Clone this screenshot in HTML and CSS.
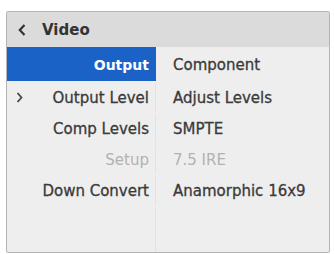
FILE: index.html
```html
<!DOCTYPE html>
<html lang="en">
<head>
  <meta charset="UTF-8">
  <title>Video</title>
  <link rel="stylesheet" href="styles.css">
</head>
<body>
  <div class="panel">
    <div class="header">
      <svg class="back" width="8" height="12" viewBox="0 0 8 12"><path d="M6.5 1 L1.8 6 L6.5 11" fill="none" stroke="#333" stroke-width="2.2"/></svg>
      <span class="title">Video</span>
    </div>
    <div class="list">
      <div class="row first">
        <div class="label selected">Output</div>
        <div class="value">Component</div>
      </div>
      <div class="row">
        <div class="label">
          <svg class="more" width="7" height="11" viewBox="0 0 7 11"><path d="M1.5 1 L5.5 5.5 L1.5 10" fill="none" stroke="#444" stroke-width="1.8"/></svg>
          Output Level
        </div>
        <div class="value">Adjust Levels</div>
      </div>
      <div class="row">
        <div class="label">Comp Levels</div>
        <div class="value">SMPTE</div>
      </div>
      <div class="row disabled">
        <div class="label">Setup</div>
        <div class="value">7.5 IRE</div>
      </div>
      <div class="row">
        <div class="label">Down Convert</div>
        <div class="value">Anamorphic 16x9</div>
      </div>
      <div class="row filler">
        <div class="label"></div>
        <div class="value"></div>
      </div>
    </div>
  </div>
</body>
</html>
```
FILE: styles.css
```css
* {
  box-sizing: border-box;
  margin: 0;
  padding: 0;
}

body {
  font-family: "DejaVu Sans", sans-serif;
  background-color: #fff;
}

.panel {
  width: 324px;
  height: 242px;
  margin: 11px 0 0 6px;
  border: 1px solid #b4b4b4;
  border-radius: 2px;
  background-color: #eeeeee;
  display: flex;
  flex-direction: column;
  overflow: hidden;
}

.header {
  height: 35px;
  background-color: #dbdbdb;
  display: flex;
  align-items: center;
  padding-left: 11px;
  flex-shrink: 0;
}

.back {
  margin-right: 16px;
}

.title {
  font-size: 15px;
  font-weight: bold;
  color: #333;
}

.list {
  flex: 1;
  display: flex;
  flex-direction: column;
}

.row {
  display: grid;
  grid-template-columns: 149px 1fr;
  height: 31px;
  padding-top: 2px;
  font-size: 15px;
  color: #3a3a3a;
  -webkit-text-stroke: 0.3px #3a3a3a;
}

.row.first {
  height: 34px;
  padding-top: 0;
}

.row.filler {
  flex: 1;
}

.label {
  display: flex;
  align-items: center;
  justify-content: flex-end;
  padding-right: 6px;
  border-right: 1px solid #e2e2e2;
  position: relative;
}

.label.selected {
  background-color: #1b62c7;
  color: #fff;
  -webkit-text-stroke: 0;
  font-size: 14px;
  font-weight: bold;
  padding-top: 2px;
  border-right-color: #1b62c7;
}

.first .value {
  padding-top: 2px;
}

.more {
  position: absolute;
  left: 9px;
  top: 9px;
}

.value {
  display: flex;
  align-items: center;
  padding-left: 17px;
}

.row.disabled {
  color: #b2b2b2;
  -webkit-text-stroke: 0;
}
```
